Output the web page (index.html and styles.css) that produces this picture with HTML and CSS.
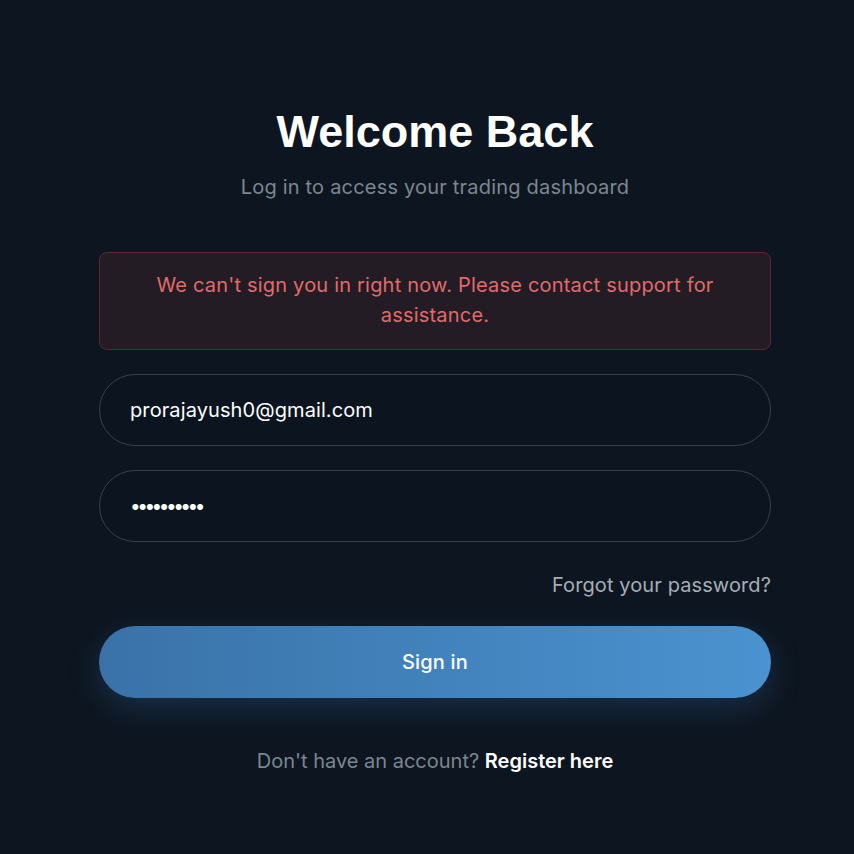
FILE: index.html
```html
<!DOCTYPE html>
<html lang="en">
<head>
<meta charset="utf-8">
<title>Welcome Back</title>
<link rel="stylesheet" href="styles.css">
</head>
<body>
<main class="page">
  <div class="card">
    <h1 class="title">Welcome Back</h1>
    <p class="subtitle">Log in to access your trading dashboard</p>
    <div class="alert">We can't sign you in right now. Please contact support for assistance.</div>
    <form class="form">
      <input class="field" type="email" value="prorajayush0@gmail.com">
      <input class="field field-pass" type="password" value="abcdefghij">
      <div class="forgot-row"><a class="forgot" href="#">Forgot your password?</a></div>
      <button class="btn" type="button">Sign in</button>
    </form>
    <p class="register">Don't have an account? <a class="register-link" href="#">Register here</a></p>
  </div>
</main>
</body>
</html>
```
FILE: styles.css
```css
* { box-sizing: border-box; }
html, body {
  margin: 0;
  background: #0d1620;
  min-height: 100%;
}
body {
  font-family: Inter, "Noto Sans", sans-serif;
  color: #ffffff;
}
.page {
  display: flex;
  justify-content: center;
  padding: 106px 0 0 16px;
  min-height: 854px;
}
.card {
  width: 672px;
  display: flex;
  flex-direction: column;
}
.title {
  margin: 0;
  font-family: "Liberation Sans", Arial, sans-serif;
  font-weight: 700;
  font-size: 45px;
  line-height: 52px;
  text-align: center;
  color: #ffffff;
}
.subtitle {
  margin: 16px 0 0;
  font-size: 20px;
  line-height: 26px;
  letter-spacing: 0.2px;
  text-align: center;
  color: #7c8691;
}
.alert {
  margin-top: 52px;
  height: 98px;
  padding: 17px 40px;
  border: 1px solid #5a2a33;
  border-radius: 8px;
  background: #231c24;
  color: #e06b6b;
  font-size: 20px;
  line-height: 30px;
  letter-spacing: 0.2px;
  text-align: center;
}
.form {
  display: flex;
  flex-direction: column;
  margin-top: 24px;
}
.field {
  height: 72px;
  border: 1px solid #39414c;
  border-radius: 36px;
  background: #0c151f;
  color: #ffffff;
  font-family: Inter, "Noto Sans", sans-serif;
  font-size: 20px;
  letter-spacing: 0.1px;
  padding: 0 30px;
  outline: none;
}
.field-pass {
  margin-top: 24px;
  font-size: 19px;
  letter-spacing: -3.5px;
}
.forgot-row {
  display: flex;
  justify-content: flex-end;
  margin-top: 30px;
}
.forgot {
  color: #a6adb5;
  font-size: 20px;
  line-height: 26px;
  letter-spacing: 0.1px;
  text-decoration: none;
}
.btn {
  margin-top: 28px;
  height: 72px;
  border: none;
  border-radius: 36px;
  background: linear-gradient(90deg, #3a72a8 0%, #4a93d0 100%);
  color: #ffffff;
  font-family: Inter, "Noto Sans", sans-serif;
  font-weight: 500;
  font-size: 20px;
  letter-spacing: 0.2px;
  box-shadow: 0 10px 30px rgba(60, 120, 190, 0.25);
}
.register {
  margin: 50px 0 0;
  font-size: 20px;
  line-height: 26px;
  text-align: center;
  color: #7c8691;
}
.register-link {
  color: #ffffff;
  font-weight: 600;
  text-decoration: none;
}
```
